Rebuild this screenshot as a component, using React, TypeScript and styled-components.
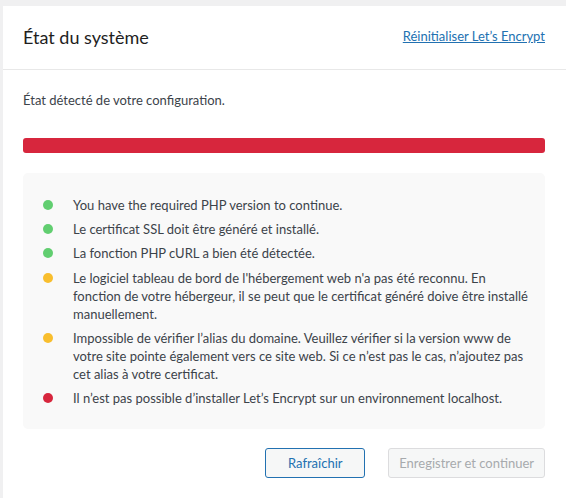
import React from 'react'
import styled, { createGlobalStyle } from 'styled-components'

type Status = 'success' | 'warning' | 'error'

interface Notice {
  status: Status;
  text: string;
}

const notices: Notice[] = [
  { status: 'success', text: 'You have the required PHP version to continue.' },
  { status: 'success', text: 'Le certificat SSL doit être généré et installé.' },
  { status: 'success', text: 'La fonction PHP cURL a bien été détectée.' },
  { status: 'warning', text: "Le logiciel tableau de bord de l'hébergement web n'a pas été reconnu. En fonction de votre hébergeur, il se peut que le certificat généré doive être installé manuellement." },
  { status: 'warning', text: 'Impossible de vérifier l’alias du domaine. Veuillez vérifier si la version www de votre site pointe également vers ce site web. Si ce n’est pas le cas, n’ajoutez pas cet alias à votre certificat.' },
  { status: 'error', text: 'Il n’est pas possible d’installer Let’s Encrypt sur un environnement localhost.' },
]

const dotColors: Record<Status, string> = {
  success: '#61ce70',
  warning: '#f8be2e',
  error: '#d7263d',
}

const GlobalStyle = createGlobalStyle`
  body{
    margin:0;
    background:#f0f0f1;
    font-family:Lato, "Liberation Sans", sans-serif;
    font-size:13px;
    color:#3c434a;
  }
`

const App: React.FC = () => {
  return (
    <>
      <GlobalStyle />
      <Page>
        <Card>
          <Header>
            <Title>État du système</Title>
            <ResetLink href="#">Réinitialiser Let’s Encrypt</ResetLink>
          </Header>
          <Body>
            <Intro>État détecté de votre configuration.</Intro>
            <ProgressBar />
            <NoticeBox>
              {notices.map((n, i) => (
                <NoticeItem key={i}>
                  <Dot $status={n.status} />
                  <NoticeText>{n.text}</NoticeText>
                </NoticeItem>
              ))}
            </NoticeBox>
            <Actions>
              <Button>Rafraîchir</Button>
              <Button disabled>Enregistrer et continuer</Button>
            </Actions>
          </Body>
        </Card>
      </Page>
    </>
  )
}

const Page = styled.div`
  padding:6px 0 0 3px;
`

const Card = styled.div`
  background:#fff;
  min-height:492px;
`

const Header = styled.div`
  height:63px;
  padding:0 21px 0 20px;
  border-bottom:1px solid #e8e8e8;
  display:flex;
  align-items:center;
  justify-content:space-between;
`

const Title = styled.h3`
  margin:0;
  font-size:18px;
  font-weight:400;
  color:#1e1e1e;
  padding-bottom:1px;
`

const ResetLink = styled.a`
  color:#2271b1;
  text-decoration:underline;
  font-size:13px;
  padding-bottom:3px;
`

const Body = styled.div`
  padding:21px 21px 0 20px;
`

const Intro = styled.p`
  margin:0;
  line-height:18px;
  color:#3c434a;
`

const ProgressBar = styled.div`
  margin-top:29px;
  height:15px;
  border-radius:3px;
  background:#d7263d;
`

const NoticeBox = styled.ul`
  margin:20px 0 0;
  list-style:none;
  background:#f9f9f9;
  border-radius:5px;
  padding:23px 15px 22px 20px;
  display:flex;
  flex-direction:column;
  gap:6.2px;
`

const NoticeItem = styled.li`
  display:flex;
  align-items:flex-start;
  gap:20px;
  line-height:18px;
`

const Dot = styled.span<{ $status: Status }>`
  flex:none;
  width:10px;
  height:10px;
  margin-top:4px;
  border-radius:50%;
  background:${p => dotColors[p.$status]};
`

const NoticeText = styled.span`
  color:#3c434a;
`

const Actions = styled.div`
  margin-top:19px;
  display:flex;
  justify-content:flex-end;
  gap:23px;
`

const Button = styled.button`
  height:30px;
  min-width:100px;
  padding:0 10px;
  border-radius:3px;
  font-family:inherit;
  font-size:13px;
  background:#f6f7f7;
  border:1px solid #2271b1;
  color:#2271b1;
  cursor:pointer;
  &:disabled{
    border-color:#dcdcde;
    color:#a7aaad;
    cursor:default;
  }
`

export default App
